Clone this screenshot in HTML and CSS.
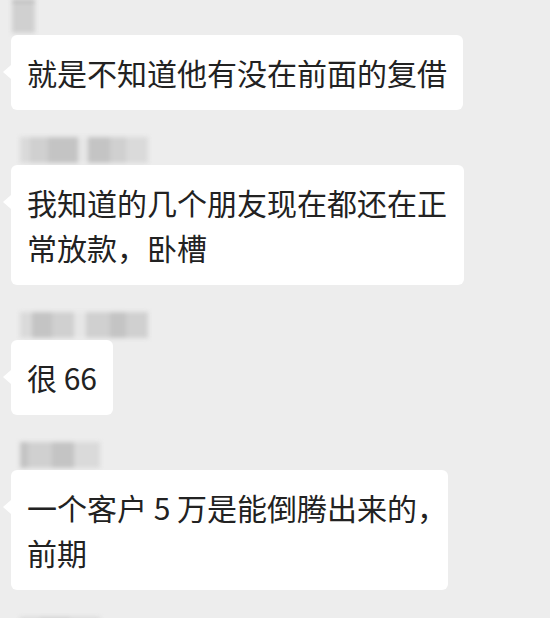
FILE: index.html
```html
<!DOCTYPE html>
<html lang="zh-CN">
<head>
  <meta charset="UTF-8" />
  <meta name="viewport" content="width=device-width, initial-scale=1.0" />
  <title>聊天记录</title>
  <link rel="stylesheet" href="styles.css">
</head>
<body>
  <div class="chat">
    <!-- names are mosaicked in the original screenshot -->
    <div class="msg">
      <div class="name name-1">
        <span class="px s2" style="width:23px"></span>
      </div>
      <div class="bubble">就是不知道他有没在前面的复借</div>
    </div>

    <div class="msg">
      <div class="name">
        <span class="px s1" style="width:10px"></span>
        <span class="px s2" style="width:18px"></span>
        <span class="px s3" style="width:30px"></span>
        <span class="px s0" style="width:10px"></span>
        <span class="px s3" style="width:22px"></span>
        <span class="px s2" style="width:16px"></span>
        <span class="px s1" style="width:22px"></span>
      </div>
      <div class="bubble">我知道的几个朋友现在都还在正常放款，卧槽</div>
    </div>

    <div class="msg">
      <div class="name">
        <span class="px s1" style="width:12px"></span>
        <span class="px s3" style="width:20px"></span>
        <span class="px s2" style="width:22px"></span>
        <span class="px s0" style="width:12px"></span>
        <span class="px s2" style="width:24px"></span>
        <span class="px s3" style="width:16px"></span>
        <span class="px s2" style="width:22px"></span>
      </div>
      <div class="bubble">很 66</div>
    </div>

    <div class="msg">
      <div class="name">
        <span class="px s3" style="width:8px"></span>
        <span class="px s2" style="width:24px"></span>
        <span class="px s3" style="width:22px"></span>
        <span class="px s1" style="width:26px"></span>
      </div>
      <div class="bubble">一个客户 5 万是能倒腾出来的<span class="half">，</span><br>前期</div>
    </div>

    <div class="msg">
      <div class="name">
        <span class="px s1" style="width:20px"></span>
        <span class="px s2" style="width:30px"></span>
        <span class="px s1" style="width:30px"></span>
      </div>
    </div>
  </div>
</body>
</html>
```

FILE: styles.css
```css
/* Global Styles */
body {
  background-color: #ededed;
  color: #222;
  font-family: "Noto Sans CJK SC", "Noto Sans", sans-serif;
  margin: 0;
  padding: 0;
  overflow: hidden;
}
.chat {
  display: flex;
  flex-direction: column;
  gap: 27px;
  padding: 5px 0 0 11px;
}
.msg {
  display: flex;
  flex-direction: column;
  align-items: flex-start;
  gap: 2px;
}
/* blurred sender name */
.name {
  display: flex;
  height: 26px;
  margin-left: 9px;
  filter: blur(2px);
}
.name-1 {
  margin-left: 1px;
  margin-top: -5px;
  height: 31px;
  border-top: 2px solid #a9a9a9;
}
.px {
  display: block;
  height: 100%;
}
.s0 { background-color: #e6e6e6; }
.s1 { background-color: #dadada; }
.s2 { background-color: #d0d0d0; }
.s3 { background-color: #c4c4c4; }
.bubble {
  position: relative;
  box-sizing: border-box;
  max-width: 453px;
  padding: 15px 16px 15px 16px;
  background-color: #fff;
  border-radius: 6px;
  font-size: 30px;
  line-height: 45px;
}
.bubble::before {
  content: "";
  position: absolute;
  left: -8px;
  top: 30px;
  border-top: 7px solid transparent;
  border-bottom: 7px solid transparent;
  border-right: 8px solid #fff;
}
/* trailing full-width comma sits half-width at line end */
.half {
  letter-spacing: -0.5em;
}
```
